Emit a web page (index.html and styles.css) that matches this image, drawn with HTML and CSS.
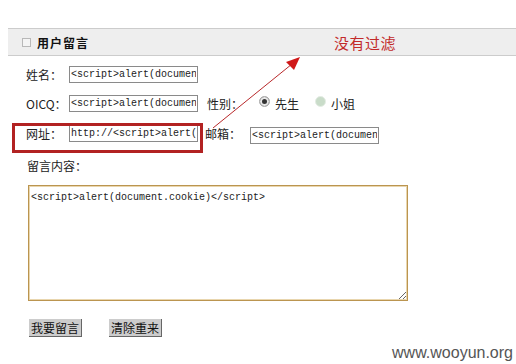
FILE: index.html
```html
<!DOCTYPE html>
<html lang="zh-CN">
<head>
    <meta charset="UTF-8">
    <title>用户留言</title>
    <link rel="stylesheet" href="styles.css">
</head>
<body>

<div class="page">
    <div class="title-bar">
        <span class="box-icon"></span>
        <span class="title">用户留言</span>
        <span class="note">没有过滤</span>
    </div>

    <form class="guestbook">
        <div class="row">
            <label class="label">姓名：</label>
            <input class="field" type="text" value="<script>alert(document.cookie)</script>">
        </div>
        <div class="row">
            <label class="label">OICQ：</label>
            <input class="field" type="text" value="<script>alert(document.cookie)</script>">
            <span class="label-inline">性别：</span>
            <span class="radio checked"></span>
            <span class="radio-text">先生</span>
            <span class="radio"></span>
            <span class="radio-text">小姐</span>
        </div>
        <div class="row">
            <label class="label">网址：</label>
            <input class="field" type="text" value="http://<script>alert(document.cookie)</script>">
            <span class="label-mail">邮箱：</span>
            <input class="field mail" type="text" value="<script>alert(document.cookie)</script>">
        </div>

        <div class="content-label">留言内容：</div>
        <textarea class="content"><script>alert(document.cookie)</script></textarea>

        <div class="buttons">
            <button type="button" class="btn">我要留言</button>
            <button type="button" class="btn">清除重来</button>
        </div>
    </form>

    <!-- annotation drawn over the screenshot -->
    <div class="mark-box"></div>
    <svg class="arrow" width="516" height="364" viewBox="0 0 516 364">
        <line x1="213" y1="128" x2="292" y2="64" stroke="#b8282a" stroke-width="1"/>
        <polygon points="300,57 286,62 294,70" fill="#d01818"/>
    </svg>

    <div class="watermark">www.wooyun.org</div>
</div>

</body>
</html>
```

FILE: styles.css
```css
body {
    margin: 0;
    background: #fff;
    font-family: "Noto Sans CJK SC", "DejaVu Sans", sans-serif;
    font-size: 12px;
    color: #222;
}

.page {
    position: relative;
    width: 516px;
    height: 364px;
    overflow: hidden;
}

.title-bar {
    display: flex;
    align-items: center;
    margin: 28px 0 0 8px;
    height: 26px;
    background: #eeeeee;
    border-top: 1px solid #cccccc;
    border-bottom: 1px solid #cccccc;
}

.box-icon {
    width: 7px;
    height: 7px;
    margin-left: 14px;
    border: 1px solid #b8b8b8;
    background: #f4f4f4;
}

.title {
    margin-left: 6px;
    font-weight: bold;
    font-size: 12px;
    letter-spacing: 1px;
    color: #111;
}

.note {
    margin-left: 245px;
    font-size: 15px;
    color: #c22a2a;
    letter-spacing: 0.5px;
}

.guestbook {
    display: flex;
    flex-direction: column;
    padding: 10px 0 0 26px;
}

.row {
    display: flex;
    align-items: center;
    height: 17px;
    margin-bottom: 12px;
}

.row:nth-child(2) {
    margin-bottom: 13px;
}

.label {
    width: 43px;
    color: #222;
}

.field {
    box-sizing: border-box;
    width: 129px;
    height: 17px;
    padding: 0 1px;
    border: 1px solid #8a8a8a;
    background: #fff;
    font-family: "Liberation Mono", "DejaVu Sans Mono", monospace;
    font-size: 10px;
    color: #222;
    outline: none;
}

.field.mail {
    margin-top: 4px;
}

.label-inline {
    margin-left: 9px;
}

.radio {
    box-sizing: border-box;
    width: 11px;
    height: 11px;
    margin-left: 17px;
    border-radius: 50%;
    background: #c9dcc9;
    border: 1px solid #e4ece4;
    margin-top: -4px;
}

.radio.checked {
    margin-left: 16px;
    background: #dcdcdc;
    border-color: #a8a8a8;
    box-shadow: inset 0 0 0 2px #e8e8e8, inset 0 0 0 5px #333;
}

.radio-text {
    margin-left: 5px;
    margin-right: -1px;
}

.label-mail {
    margin-left: 7px;
    width: 45px;
}

.content-label {
    margin-top: 4px;
    margin-left: 1px;
    line-height: 16px;
}

.content {
    box-sizing: border-box;
    width: 380px;
    height: 116px;
    margin: 11px 0 0 2px;
    padding: 6px 2px;
    border: 1px solid #bb9550;
    box-shadow: inset 0 0 0 1px #e9d6ae;
    font-family: "Liberation Mono", "DejaVu Sans Mono", monospace;
    font-size: 10px;
    color: #222;
    resize: both;
    outline: none;
}

.buttons {
    display: flex;
    gap: 27px;
    margin: 18px 0 0 3px;
}

.btn {
    height: 18px;
    padding: 0 2px;
    border: none;
    border-right: 1px solid #666;
    border-bottom: 1px solid #666;
    background: #cccccc;
    font-family: "Noto Sans CJK SC", sans-serif;
    font-size: 12px;
    line-height: 17px;
    color: #111;
}

.mark-box {
    position: absolute;
    left: 12px;
    top: 123px;
    width: 185px;
    height: 24px;
    border: 3px solid #b22222;
}

.arrow {
    position: absolute;
    left: 0;
    top: 0;
}

.watermark {
    position: absolute;
    right: 3px;
    bottom: 2px;
    font-family: "Liberation Sans", Arial, sans-serif;
    font-size: 16px;
    color: #555;
}
```
